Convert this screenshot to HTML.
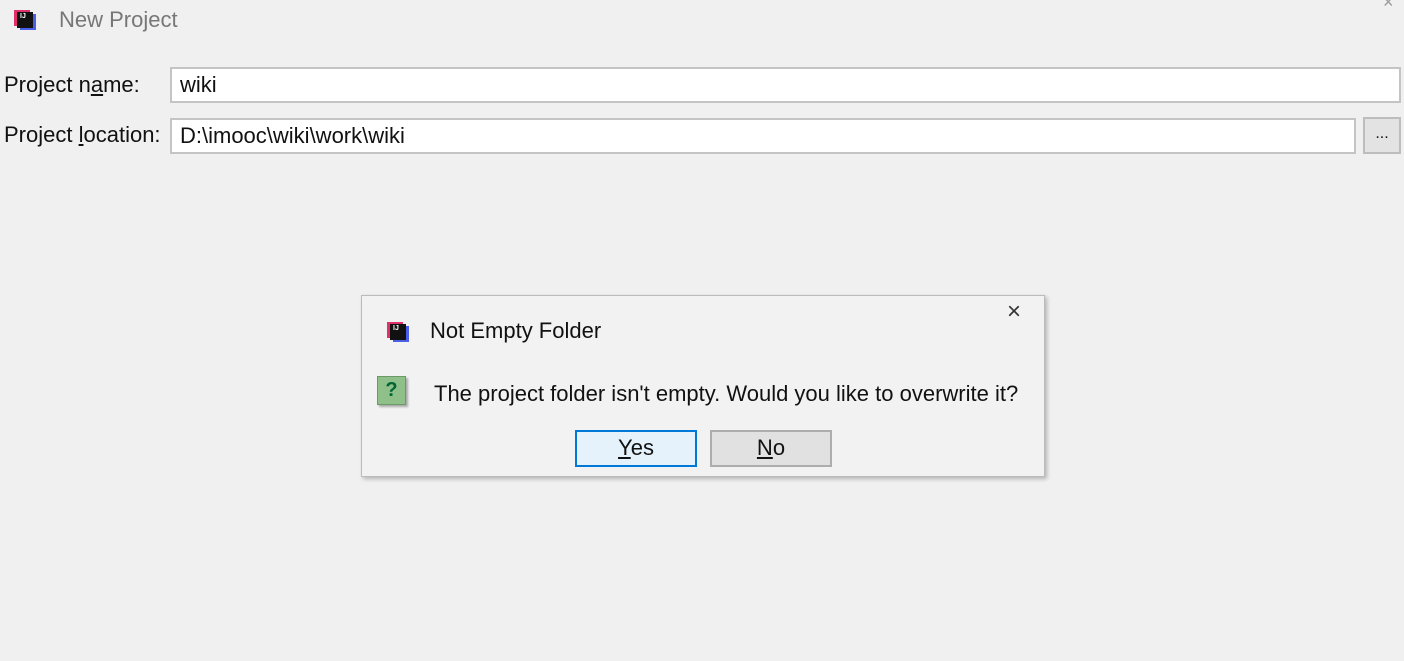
<!DOCTYPE html>
<html><head><style>
body{margin:0;width:1404px;height:661px;background:#f0f0f0;font-family:"Liberation Sans",sans-serif;position:relative;overflow:hidden;color:#111}
.a{position:absolute;white-space:nowrap}
.in{position:absolute;background:#fff;border:2px solid #c4c4c4;box-sizing:border-box;font-size:22px;padding-left:8px;line-height:32px}
.logo{position:absolute;width:16px;height:16px;background:#111;box-shadow:-3px -2px 0 #e0306a,3px 2px 0 #4a5ee8}
.logo:after{content:"IJ";position:absolute;color:#fff;font-size:7px;left:3px;top:1px;font-weight:bold}
</style></head><body>
<div class="logo" style="left:17px;top:12px"></div>
<div class="a" style="left:59px;top:7px;font-size:22px;color:#777">New Project</div>
<div class="a" style="left:1383px;top:-8px;font-size:18px;color:#999">×</div>
<div class="a" style="left:4px;top:72px;font-size:22px">Project n<u>a</u>me:</div>
<div class="a" style="left:4px;top:122px;font-size:22px">Project <u>l</u>ocation:</div>
<div class="in" style="left:170px;top:67px;width:1231px;height:36px">wiki</div>
<div class="in" style="left:170px;top:118px;width:1186px;height:36px">D:\imooc\wiki\work\wiki</div>
<div class="a" style="left:1363px;top:117px;width:38px;height:37px;background:#e3e3e3;border:2px solid #bdbdbd;box-sizing:border-box;text-align:center;font-size:16px;line-height:30px">...</div>

<div class="a" style="left:361px;top:295px;width:684px;height:182px;background:#f2f2f2;border:1px solid #bbb;box-shadow:2px 2px 4px rgba(0,0,0,0.25);box-sizing:border-box">
<div class="logo" style="left:28px;top:28px"></div>
<div class="a" style="left:68px;top:22px;font-size:22px">Not Empty Folder</div>
<div class="a" style="left:645px;top:2px;font-size:24px;color:#333">×</div>
<div class="a" style="left:15px;top:80px;width:29px;height:29px;background:#8fc08a;border:1px solid #6a9a66;box-shadow:2px 2px 2px rgba(0,0,0,0.3);box-sizing:border-box;text-align:center;font-weight:bold;font-size:20px;line-height:27px;color:#063">?</div>
<div class="a" style="left:72px;top:85px;font-size:22px">The project folder isn't empty. Would you like to overwrite it?</div>
<div class="a" style="left:213px;top:134px;width:122px;height:37px;background:#e5f1fb;border:2px solid #0078d7;box-sizing:border-box;text-align:center;font-size:22px;line-height:32px"><u>Y</u>es</div>
<div class="a" style="left:348px;top:134px;width:122px;height:37px;background:#e1e1e1;border:2px solid #adadad;box-sizing:border-box;text-align:center;font-size:22px;line-height:32px"><u>N</u>o</div>
</div>
</body></html>
